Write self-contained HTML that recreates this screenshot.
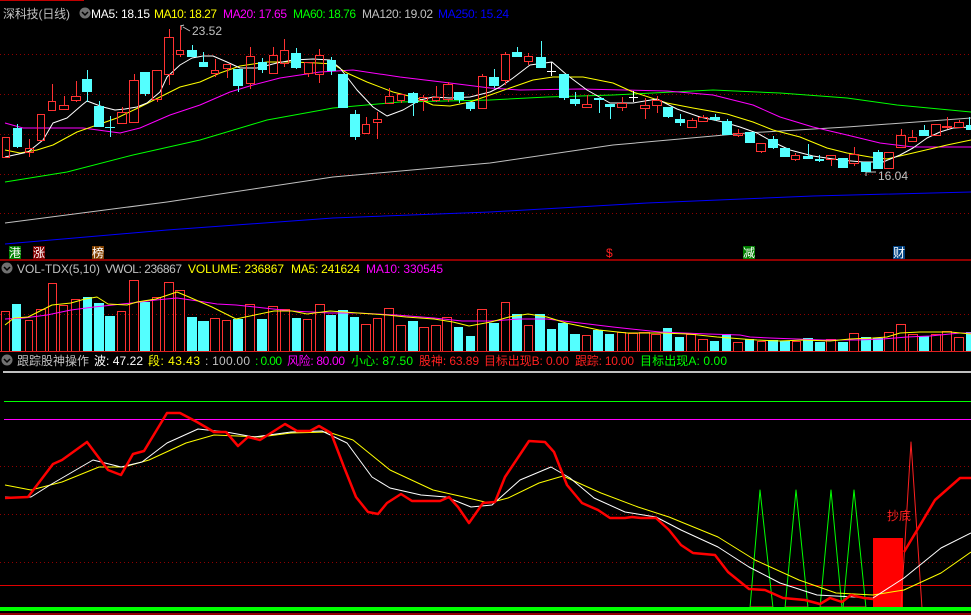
<!DOCTYPE html>
<html><head><meta charset="utf-8"><style>
html,body{margin:0;padding:0;background:#000;width:971px;height:615px;overflow:hidden}
svg{display:block}
text{font-family:"Liberation Sans","Noto Sans CJK SC",sans-serif;font-size:12px}
</style></head><body>
<svg id="s" width="971" height="615" viewBox="0 0 971 615" xmlns="http://www.w3.org/2000/svg">
<rect width="971" height="615" fill="#000"/>
<line x1="0" y1="0.5" x2="84" y2="0.5" stroke="#c00000"/>
<g stroke="#900000" stroke-dasharray="1,3" stroke-width="1">
<line x1="0" y1="54.5" x2="971" y2="54.5"/><line x1="0" y1="94.5" x2="971" y2="94.5"/><line x1="0" y1="134.5" x2="971" y2="134.5"/><line x1="0" y1="174.5" x2="971" y2="174.5"/><line x1="0" y1="213.5" x2="971" y2="213.5"/>
<line x1="0" y1="314.5" x2="971" y2="314.5"/>
<line x1="0" y1="466.5" x2="971" y2="466.5"/><line x1="0" y1="514.5" x2="971" y2="514.5"/><line x1="0" y1="562.5" x2="971" y2="562.5"/>
</g>
<text x="3" y="18" fill="#c0c0c0" textLength="67" font-size="13">深科技(日线)</text>
<circle cx="85" cy="13" r="5.5" fill="#707070"/><path d="M82 12 L85 15 L88 12" stroke="#000" stroke-width="1.5" fill="none"/>
<text x="91" y="18" fill="#fff" textLength="59">MA5: 18.15</text>
<text x="154" y="18" fill="#ffff00" textLength="63">MA10: 18.27</text>
<text x="223" y="18" fill="#ff00ff" textLength="64">MA20: 17.65</text>
<text x="293" y="18" fill="#00ff00" textLength="63">MA60: 18.76</text>
<text x="362" y="18" fill="#c0c0c0" textLength="71">MA120: 19.02</text>
<text x="438" y="18" fill="#0000ff" textLength="71">MA250: 15.24</text>
<text x="192" y="35" fill="#c0c0c0" font-size="13">23.52</text>
<path d="M181 25 L181 30 M181 26 L184 25 M183 27 L190 31" stroke="#c0c0c0" fill="none"/>
<text x="878" y="180" fill="#c0c0c0" font-size="13">16.04</text>
<path d="M866 172 L876 172 M866 172 L869 169 M866 172 L866 176" stroke="#c0c0c0" fill="none"/>
<g id="ma"></g>
<g id="candles"></g>
<rect x="9" y="246" width="12" height="13" fill="#008000"/><text x="9" y="257" fill="#fff" font-size="12">港</text>
<rect x="33" y="246" width="12" height="13" fill="#800000"/><text x="33" y="257" fill="#fff" font-size="12">涨</text>
<rect x="92" y="246" width="12" height="13" fill="#804000"/><text x="92" y="257" fill="#fff" font-size="12">榜</text>
<text x="606" y="257" fill="#ff2020" font-size="11">$</text>
<rect x="743" y="246" width="12" height="13" fill="#008000"/><text x="743" y="257" fill="#fff" font-size="12">减</text>
<rect x="893" y="246" width="12" height="13" fill="#004080"/><text x="893" y="257" fill="#fff" font-size="12">财</text>
<line x1="0" y1="260" x2="971" y2="260" stroke="#c00000" stroke-width="1.5"/>
<circle cx="7" cy="268" r="5.5" fill="#707070"/><path d="M4 267 L7 270 L10 267" stroke="#000" stroke-width="1.5" fill="none"/>
<text x="17" y="273" fill="#c0c0c0" textLength="83">VOL-TDX(5,10)</text>
<text x="105" y="273" fill="#c0c0c0" textLength="77">VWOL: 236867</text>
<text x="188" y="273" fill="#ffff00" textLength="96">VOLUME: 236867</text>
<text x="291" y="273" fill="#ffff00" textLength="69">MA5: 241624</text>
<text x="366" y="273" fill="#ff00ff" textLength="77">MA10: 330545</text>
<g id="vol"></g>
<line x1="0" y1="351.5" x2="971" y2="351.5" stroke="#e02020"/>
<circle cx="7" cy="360" r="5.5" fill="#707070"/><path d="M4 359 L7 362 L10 359" stroke="#000" stroke-width="1.5" fill="none"/>
<text x="17" y="365" fill="#c0c0c0" textLength="72">跟踪股神操作</text>
<text x="94" y="365" fill="#fff" textLength="49">波: 47.22</text>
<text x="148" y="365" fill="#ffff00" textLength="52">段: 43.43</text>
<text x="205" y="365" fill="#c0c0c0" textLength="45">: 100.00</text>
<text x="255" y="365" fill="#00ff00" textLength="27">: 0.00</text>
<text x="287" y="365" fill="#ff00ff" textLength="58">风险: 80.00</text>
<text x="351" y="365" fill="#00ff00" textLength="62">小心: 87.50</text>
<text x="419" y="365" fill="#ff2020" textLength="60">股神: 63.89</text>
<text x="484" y="365" fill="#ff2020" textLength="85">目标出现B: 0.00</text>
<text x="575" y="365" fill="#ff2020" textLength="59">跟踪: 10.00</text>
<text x="640" y="365" fill="#00ff00" textLength="87">目标出现A: 0.00</text>
<line x1="3" y1="372" x2="971" y2="372" stroke="#c0c0c0" stroke-width="2"/>
<line x1="4" y1="401.5" x2="971" y2="401.5" stroke="#00ff00"/>
<line x1="4" y1="419.5" x2="971" y2="419.5" stroke="#ff00ff"/>
<line x1="0" y1="585.5" x2="971" y2="585.5" stroke="#e00000"/>
<g id="ind"></g>
<rect x="0" y="607" width="971" height="4" fill="#00ff00"/>
<line x1="0" y1="614" x2="971" y2="614" stroke="#c00000" stroke-width="1.5"/>
<text x="887" y="520" fill="#ff2020" font-size="13">抄底</text>
</svg>
<script>
var NS="http://www.w3.org/2000/svg";
function el(p,t,a){var e=document.createElementNS(NS,t);for(var k in a)e.setAttribute(k,a[k]);document.getElementById(p).appendChild(e);return e;}
function pl(p,pts,col,w){el(p,"polyline",{points:pts.map(function(q){return q.join(",")}).join(" "),stroke:col,"stroke-width":w||1,fill:"none","stroke-linejoin":"round"});}
pl("ma",[[5,244],[167,230],[333,218],[490,212],[647,203],[813,196],[971,192]],"#0000ff");
pl("ma",[[5,223],[167,202],[333,177],[490,163],[613,145],[747,133],[847,127],[971,118]],"#c0c0c0");
pl("ma",[[5,182],[67,172],[133,155],[200,140],[267,120],[333,108],[400,102],[490,100],[547,97],[613,95],[713,90],[780,93],[847,98],[897,105],[971,112]],"#00ff00");
pl("ma",[[5,123],[23,128],[83,128],[120,133],[140,128],[170,115],[200,105],[230,92],[253,85],[280,78],[320,72],[353,70],[400,77],[450,83],[490,88],[520,90],[580,89],[667,91],[713,95],[753,105],[780,117],[813,127],[847,135],[880,143],[913,147],[971,147]],"#ff00ff");
pl("ma",[[5,150],[20,153],[37,150],[53,145],[77,132],[100,124],[117,118],[140,107],[160,97],[180,87],[200,82],[220,73],[240,66],[267,62],[293,62],[317,63],[333,64],[347,73],[367,82],[393,92],[417,98],[433,105],[450,106],[470,102],[490,95],[510,88],[533,80],[553,77],[583,77],[613,83],[633,92],[667,103],[693,108],[727,114],[753,122],[773,130],[800,137],[827,148],[847,153],[870,157],[887,159],[913,153],[947,145],[971,140]],"#ffff00");
pl("ma",[[5,157],[28,152],[43,140],[53,123],[67,118],[82,105],[87,101],[103,107],[115,110],[125,109],[137,107],[147,103],[160,92],[167,77],[180,65],[192,58],[203,56],[213,56],[227,62],[240,68],[257,68],[277,63],[293,60],[313,59],[330,60],[340,68],[357,90],[373,107],[387,116],[403,110],[420,100],[433,97],[450,98],[470,97],[490,92],[500,87],[513,78],[530,65],[552,62],[567,75],[587,90],[610,103],[633,103],[657,99],[677,109],[700,117],[723,122],[740,127],[757,133],[773,142],[790,150],[813,156],[840,160],[863,162],[883,162],[900,155],[913,148],[927,138],[940,132],[953,128],[971,127]],"#ffffff");
var C=[[2,9,137,157,137,157,'r'],[13,21,128,146,124,148,'c'],[25,33,148,152,139,157,'r'],[37,44,114,140,114,140,'r'],[48,55,101,110,84,110,'r'],[59,68,105,109,96,109,'r'],[71,80,96,100,81,102,'r'],[82,91,79,91,70,102,'c'],[94,103,106,126,101,127,'c'],[105,114,127,127,116,137,'c'],[117,126,112,123,107,123,'r'],[129,138,80,122,74,123,'r'],[140,149,72,93,72,96,'c'],[152,161,70,99,70,102,'r'],[164,173,37,74,29,85,'r'],[176,183,50,54,26,57,'r'],[187,196,50,56,45,56,'c'],[199,207,62,66,52,67,'c'],[211,218,70,73,59,77,'r'],[223,230,64,68,64,78,'r'],[233,242,69,85,69,92,'c'],[246,254,56,83,47,89,'r'],[258,266,62,69,58,73,'c'],[269,277,55,73,47,74,'r'],[280,288,50,63,39,67,'r'],[291,300,53,67,48,69,'c'],[304,312,62,73,62,77,'r'],[315,323,55,74,49,83,'r'],[327,335,60,70,57,75,'c'],[338,347,74,107,74,107,'c'],[350,359,114,136,110,140,'c'],[362,369,124,133,117,133,'r'],[373,381,119,122,112,139,'r'],[385,393,96,103,88,103,'r'],[397,404,94,100,94,103,'r'],[408,417,93,102,92,116,'c'],[419,427,97,100,95,111,'r'],[432,439,97,100,86,102,'r'],[443,452,84,99,82,102,'r'],[454,463,92,99,92,103,'c'],[466,474,102,108,102,111,'c'],[478,486,76,108,74,108,'r'],[489,498,77,85,69,88,'c'],[501,509,54,80,52,85,'r'],[512,521,52,56,47,57,'c'],[524,532,56,61,53,65,'r'],[536,545,57,67,41,67,'c'],[547,555,71,71,62,76,'w'],[559,568,74,97,74,100,'c'],[570,579,99,103,92,106,'c'],[582,591,104,107,95,107,'r'],[594,603,98,99,98,113,'c'],[605,614,104,106,104,119,'c'],[617,626,103,107,97,111,'r'],[629,637,97,97,91,102,'w'],[640,649,105,108,98,119,'r'],[652,661,100,105,96,113,'r'],[663,672,107,116,107,118,'c'],[675,684,119,122,114,126,'c'],[687,696,120,127,118,127,'r'],[698,707,117,121,115,121,'r'],[710,719,117,119,114,121,'c'],[722,731,121,134,119,135,'c'],[733,742,133,135,129,137,'r'],[745,754,132,142,132,143,'c'],[756,765,143,151,143,153,'r'],[768,777,139,147,136,149,'c'],[780,789,148,156,148,157,'c'],[791,799,155,159,153,161,'r'],[803,812,156,158,144,158,'c'],[815,823,159,160,155,162,'c'],[826,835,155,159,155,166,'r'],[838,847,158,167,158,167,'c'],[849,858,154,163,147,166,'r'],[861,870,162,171,162,172,'c'],[873,882,152,168,150,169,'c'],[884,893,152,168,152,168,'r'],[896,905,135,147,129,148,'r'],[908,916,137,141,130,141,'r'],[919,928,130,135,125,135,'c'],[931,940,124,135,124,135,'r'],[942,951,126,127,117,129,'r'],[954,963,122,127,120,128,'r'],[966,971,125,129,117,129,'c']];
C.forEach(function(c){var x0=c[0],x1=c[1],t=c[2],b=c[3],h=c[4],l=c[5],ty=c[6];var cx=Math.round((x0+x1)/2)+0.5;
 var col=ty=='r'?'#ff3232':(ty=='c'?'#54ffff':'#ffffff');
 el("candles","line",{x1:cx,y1:h,x2:cx,y2:t,stroke:col});
 el("candles","line",{x1:cx,y1:b,x2:cx,y2:l,stroke:col});
 if(ty=='r'){el("candles","rect",{x:x0+0.5,y:t+0.5,width:x1-x0,height:Math.max(b-t,1),fill:"none",stroke:col});}
 else if(t==b||ty=='w'){el("candles","line",{x1:x0,y1:t+0.5,x2:x1+1,y2:t+0.5,stroke:col});}
 else{el("candles","rect",{x:x0,y:t,width:x1-x0+1,height:b-t+1,fill:col});}
});
var V=[[1,9,311,'r'],[12,20,304,'c'],[25,32,320,'r'],[36,45,309,'r'],[48,56,283,'r'],[59,67,305,'r'],[71,79,299,'r'],[83,91,297,'c'],[94,103,303,'c'],[105,114,316,'c'],[117,125,311,'r'],[129,138,280,'r'],[140,149,302,'c'],[152,160,297,'r'],[164,173,282,'r'],[175,184,290,'r'],[187,196,317,'c'],[198,208,321,'c'],[210,219,318,'r'],[222,230,320,'r'],[233,242,319,'c'],[245,254,304,'r'],[257,266,319,'c'],[268,277,306,'r'],[280,289,309,'r'],[292,300,318,'c'],[303,311,319,'r'],[315,324,304,'r'],[326,335,315,'c'],[338,347,310,'c'],[350,358,317,'c'],[361,370,324,'r'],[373,381,318,'r'],[384,393,308,'r'],[396,405,325,'r'],[408,417,321,'c'],[419,428,327,'r'],[431,440,325,'r'],[442,451,317,'r'],[454,462,327,'c'],[466,474,336,'c'],[477,486,309,'r'],[489,498,323,'c'],[501,509,302,'r'],[512,521,314,'c'],[524,532,325,'r'],[535,544,314,'c'],[547,555,329,'c'],[558,567,323,'c'],[570,579,334,'c'],[582,590,335,'r'],[593,602,330,'c'],[605,613,334,'c'],[617,625,332,'r'],[628,637,333,'r'],[639,649,332,'r'],[651,660,334,'r'],[663,671,328,'c'],[675,683,337,'c'],[686,695,334,'r'],[698,707,339,'r'],[710,718,341,'c'],[722,730,334,'c'],[733,742,342,'r'],[745,753,339,'c'],[757,765,341,'r'],[768,777,340,'c'],[780,789,341,'c'],[792,800,341,'r'],[803,812,338,'c'],[815,824,342,'c'],[826,835,339,'r'],[838,847,342,'c'],[849,858,333,'r'],[861,870,337,'c'],[873,882,338,'c'],[884,893,332,'r'],[896,905,324,'r'],[908,917,334,'r'],[919,928,336,'c'],[931,940,334,'r'],[942,951,331,'r'],[954,963,337,'r'],[966,971,332,'c']];
V.forEach(function(v){if(v[3]=='r')el("vol","rect",{x:v[0]+0.5,y:v[2]+0.5,width:v[1]-v[0],height:351-v[2],fill:"none",stroke:"#ff3232"});else el("vol","rect",{x:v[0],y:v[2],width:v[1]-v[0]+1,height:352-v[2],fill:"#54ffff"});});
pl("vol",[[5,319],[24,318],[47,315],[71,310],[94,307],[113,305],[132,303],[156,300],[177,298],[198,301],[217,304],[236,305],[264,308],[292,311],[330,313],[358,313],[396,315],[434,318],[462,321],[491,321],[519,319],[547,319],[580,323],[613,327],[660,332],[708,334],[740,335],[750,337],[770,338],[797,339],[823,340],[857,340],[883,339],[907,337],[930,336],[960,333],[971,333]],"#ff00ff");
pl("vol",[[5,325],[14,318],[28,317],[52,305],[71,303],[85,299],[97,297],[108,304],[127,305],[137,302],[156,299],[177,292],[189,297],[212,307],[236,319],[250,316],[274,311],[292,311],[307,314],[330,311],[358,313],[387,315],[406,317],[434,319],[453,322],[469,326],[491,322],[509,317],[528,314],[547,317],[566,323],[599,330],[627,333],[660,333],[689,334],[717,337],[743,339],[757,340],[780,341],[803,340],[830,341],[850,339],[873,338],[887,337],[900,333],[920,332],[950,332],[971,334]],"#ffff00");
[[750,760,773],[785,796,808],[820,831,842],[843,854,866]].forEach(function(s){pl("ind",[[s[0],608],[s[1],490],[s[2],608]],"#00ff00");el("ind","line",{x1:s[0],y1:607,x2:s[2],y2:607,stroke:"#ff3030"});});
el("ind","rect",{x:873,y:538,width:30,height:70,fill:"#ff0000"});
pl("ind",[[901,608],[911,442],[922,608]],"#ff2020");
pl("ind",[[5,485],[31,490],[62,482],[99,467],[124,467],[149,460],[186,443],[214,435],[260,437],[291,433],[328,432],[353,440],[390,470],[433,490],[464,497],[489,503],[508,498],[539,483],[563,476],[601,493],[638,507],[669,517],[718,537],[755,560],[799,580],[836,593],[873,595],[904,590],[941,573],[971,552]],"#ffff00");
pl("ind",[[5,497],[31,497],[50,485],[93,460],[121,467],[142,462],[167,443],[198,429],[226,432],[254,437],[291,432],[322,431],[347,443],[372,477],[390,488],[421,495],[446,497],[471,507],[492,505],[520,480],[551,467],[570,478],[594,498],[625,512],[656,517],[681,530],[718,547],[749,567],[780,583],[817,595],[854,597],[873,598],[904,578],[941,548],[971,533]],"#ffffff");
pl("ind",[[5,498],[28,497],[53,464],[62,460],[87,442],[108,470],[121,475],[133,454],[144,451],[167,413],[180,413],[197,422],[214,432],[226,432],[238,446],[248,437],[260,440],[285,424],[297,431],[310,431],[319,426],[331,433],[344,467],[356,497],[368,512],[378,514],[387,503],[401,494],[412,501],[440,501],[449,497],[458,507],[469,523],[483,503],[495,502],[505,477],[529,441],[545,442],[554,452],[567,485],[582,503],[598,510],[610,518],[625,518],[632,517],[641,518],[656,518],[669,530],[681,545],[693,553],[715,555],[728,572],[749,589],[765,590],[783,598],[805,600],[820,604],[830,598],[842,602],[851,595],[864,598],[873,599]],"#ff0000",2.5);
pl("ind",[[904,552],[935,500],[960,478],[971,478]],"#ff0000",2.5);
</script>
</body></html>
